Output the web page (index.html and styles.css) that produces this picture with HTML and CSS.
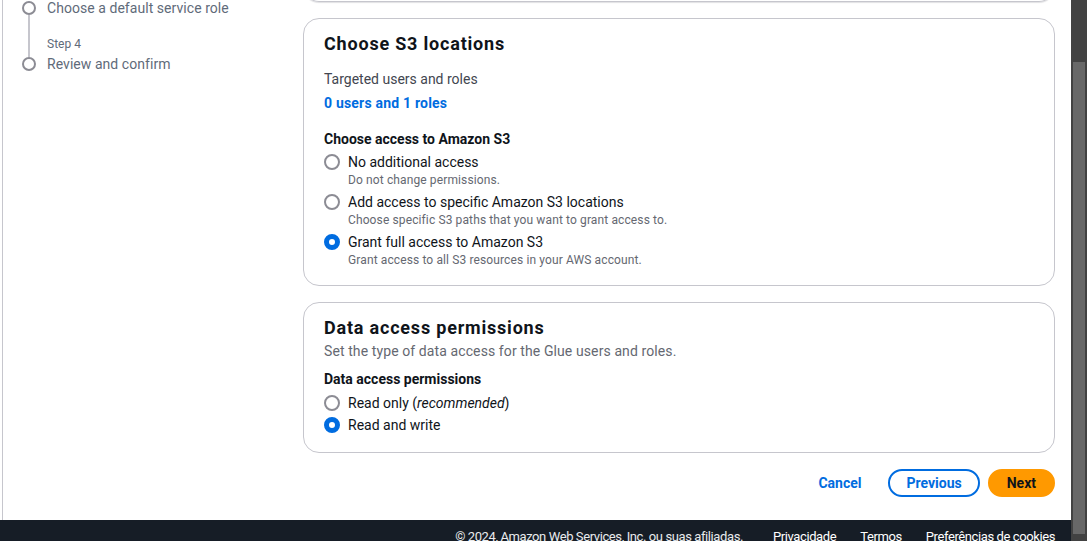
FILE: index.html
```html
<!DOCTYPE html>
<html lang="en">
<head>
<meta charset="utf-8">
<title>Choose S3 locations</title>
<link rel="stylesheet" href="styles.css">
</head>
<body>
<div class="window">
  <div class="app">
    <div class="main">
      <nav class="nav">
        <div class="steps">
          <span class="step-dot"></span>
          <span class="step-title">Choose a default service role</span>
          <span class="step-line"></span>
          <span class="step-label">Step 4</span>
          <span class="step-dot"></span>
          <span class="step-title">Review and confirm</span>
        </div>
      </nav>
      <section class="content">
        <div class="prev-card"></div>

        <div class="card">
          <h2 class="card-title">Choose S3 locations</h2>
          <div class="kv-label">Targeted users and roles</div>
          <a class="kv-link" href="#">0 users and 1 roles</a>
          <div class="field-label field-label-s3">Choose access to Amazon S3</div>
          <div class="radio-group">
            <label class="radio">
              <span class="radio-ctrl"></span>
              <span class="radio-text">
                <span class="radio-label">No additional access</span>
                <span class="radio-desc">Do not change permissions.</span>
              </span>
            </label>
            <label class="radio">
              <span class="radio-ctrl"></span>
              <span class="radio-text">
                <span class="radio-label">Add access to specific Amazon S3 locations</span>
                <span class="radio-desc">Choose specific S3 paths that you want to grant access to.</span>
              </span>
            </label>
            <label class="radio">
              <span class="radio-ctrl checked"></span>
              <span class="radio-text">
                <span class="radio-label">Grant full access to Amazon S3</span>
                <span class="radio-desc">Grant access to all S3 resources in your AWS account.</span>
              </span>
            </label>
          </div>
        </div>

        <div class="card card-data">
          <h2 class="card-title">Data access permissions</h2>
          <div class="card-desc">Set the type of data access for the Glue users and roles.</div>
          <div class="field-label field-label-data">Data access permissions</div>
          <div class="radio-group radio-group-tight">
            <label class="radio">
              <span class="radio-ctrl"></span>
              <span class="radio-label">Read only (<em>recommended</em>)</span>
            </label>
            <label class="radio">
              <span class="radio-ctrl checked"></span>
              <span class="radio-label">Read and write</span>
            </label>
          </div>
        </div>

        <div class="actions">
          <button class="btn btn-link">Cancel</button>
          <button class="btn btn-normal">Previous</button>
          <button class="btn btn-primary">Next</button>
        </div>
      </section>
    </div>
    <footer class="footer">
      <span class="copyright">© 2024, Amazon Web Services, Inc. ou suas afiliadas.</span>
      <a href="#">Privacidade</a>
      <a href="#">Termos</a>
      <a href="#">Preferências de cookies</a>
    </footer>
  </div>
  <div class="scrollbar"><div class="thumb"></div></div>
</div>
</body>
</html>
```
FILE: styles.css
```css
* { box-sizing: border-box; }
html, body { margin: 0; padding: 0; background: #fff; }
body {
  font-family: Roboto, "Open Sans", sans-serif;
  font-size: 14px;
  line-height: 20px;
  color: #0f141a;
  overflow: hidden;
}
.window {
  display: flex;
  width: 1087px;
  height: 541px;
  overflow: hidden;
}
.app {
  width: 1071px;
  height: 541px;
  overflow: hidden;
  display: flex;
  flex-direction: column;
}
.main {
  height: 520px;
  flex: none;
  display: flex;
}
.nav {
  width: 301px;
  margin-left: 2px;
  border-left: 1px solid #c6c6cd;
  padding-left: 19px;
  flex: none;
}
.steps {
  display: grid;
  grid-template-columns: 14px 1fr;
  column-gap: 11px;
  margin-top: -2px;
  color: #5f6b7a;
}
.step-dot {
  width: 14px;
  height: 14px;
  border: 2px solid #8c8c94;
  border-radius: 50%;
  align-self: center;
}
.step-title { font-size: 14px; line-height: 20px; letter-spacing: 0.05px; }
.step-line {
  justify-self: center;
  width: 2px;
  background: #c6c6cd;
  margin: -3px 0 -3px;
}
.step-label {
  font-size: 12px;
  line-height: 16px;
  margin-top: 18px;
  margin-bottom: 2px;
}
.content {
  flex: 1;
  padding-right: 16px;
  display: flex;
  flex-direction: column;
}
.prev-card {
  height: 17px;
  margin-top: -15px;
  border: 1px solid #c6c6cd;
  border-top: 0;
  border-radius: 0 0 16px 16px;
  box-shadow: 0 1px 1px rgba(0, 7, 22, 0.12);
}
.card {
  margin-top: 16px;
  border: 1px solid #c6c6cd;
  border-radius: 16px;
  padding: 14px 20px 17px;
}
.card-title {
  margin: 0;
  font-size: 18px;
  line-height: 22px;
  font-weight: 700;
  letter-spacing: 0.8px;
  color: #0f141a;
}
.kv-label {
  margin-top: 14px;
  color: #424650;
}
.kv-link {
  display: block;
  margin-top: 4px;
  color: #006ce0;
  font-weight: 700;
  letter-spacing: 0.2px;
  text-decoration: none;
}
.field-label { font-weight: 700; color: #0f141a; }
.field-label-s3 { margin-top: 16px; }
.field-label-data { margin-top: 8px; }
.card-desc { margin-top: 2px; color: #656871; letter-spacing: 0.1px; }
.radio-group {
  margin-top: 3px;
  display: flex;
  flex-direction: column;
  gap: 4px;
}
.radio-group-tight { margin-top: 4px; gap: 2px; }
.radio {
  display: flex;
  align-items: flex-start;
  gap: 8px;
}
.radio-ctrl {
  width: 16px;
  height: 16px;
  margin-top: 2px;
  border: 2px solid #8c8c94;
  border-radius: 50%;
  flex: none;
  background: #fff;
}
.radio-ctrl.checked {
  border: 5px solid #006ce0;
  background: #fff;
}
.radio-text { display: flex; flex-direction: column; }
.radio-label { color: #0f141a; }
.radio-desc {
  font-size: 12px;
  line-height: 16px;
  letter-spacing: 0.12px;
  color: #656871;
}
.actions {
  margin-top: 16px;
  display: flex;
  justify-content: flex-end;
  gap: 8px;
}
.btn {
  font-family: Roboto, "Open Sans", sans-serif;
  font-size: 14px;
  line-height: 20px;
  font-weight: 700;
  padding: 2px 16px;
  border: 2px solid transparent;
  border-radius: 20px;
  background: transparent;
  cursor: pointer;
}
.btn-link { color: #006ce0; padding: 2px 17px; }
.btn-normal { color: #006ce0; border-color: #006ce0; background: #fff; }
.btn-primary { color: #0f141a; background: #ff9900; border-color: #ff9900; padding: 2px 17px; }
.footer {
  flex: none;
  height: 40px;
  background: #161d26;
  display: flex;
  justify-content: flex-end;
  gap: 24px;
  padding: 9px 16px 0;
  font-family: Roboto, sans-serif;
  font-size: 13px;
  letter-spacing: -0.4px;
  line-height: 16px;
  color: #ffffff;
}
.footer a { color: #ffffff; text-decoration: none; }
.copyright { margin-right: 6px; color: #e9ebed; }
.scrollbar {
  width: 16px;
  height: 541px;
  background: #424242;
  padding: 62px 2px 7px;
  flex: none;
}
.thumb {
  height: 100%;
  background: #686868;
}
```
